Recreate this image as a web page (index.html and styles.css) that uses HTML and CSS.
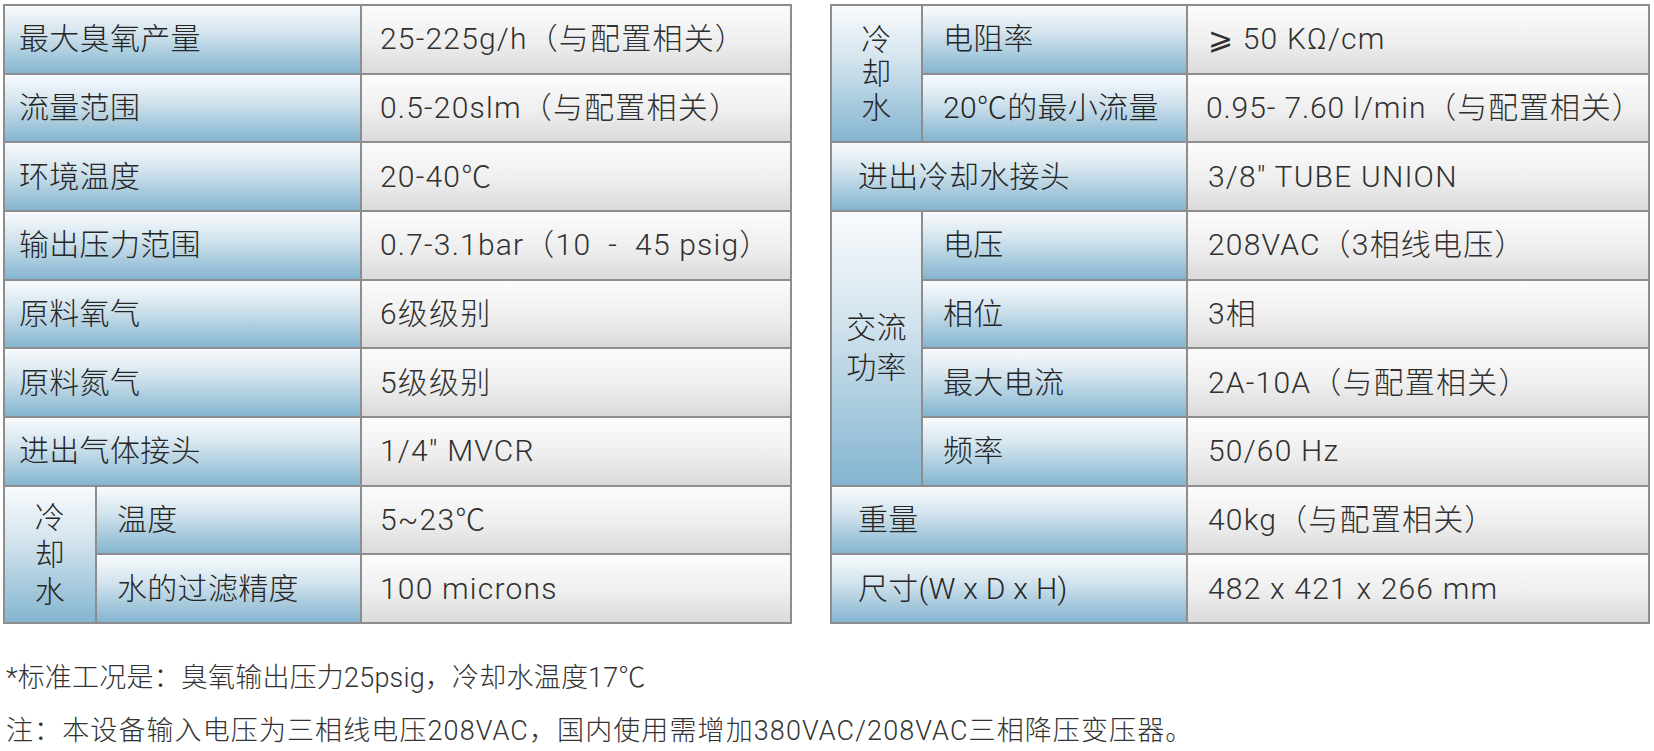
FILE: index.html
```html
<!DOCTYPE html>
<html lang="zh-CN">
<head>
<meta charset="utf-8">
<title>臭氧发生器参数</title>
<link rel="stylesheet" href="styles.css">
</head>
<body>
<div class="page">
  <div class="tables">
    <div class="spec spec-left">
      <div class="cell label span2">最大臭氧产量</div>
      <div class="cell value">25-225g/h（与配置相关）</div>
      <div class="cell label span2">流量范围</div>
      <div class="cell value">0.5-20slm（与配置相关）</div>
      <div class="cell label span2">环境温度</div>
      <div class="cell value">20-40℃</div>
      <div class="cell label span2">输出压力范围</div>
      <div class="cell value">0.7-3.1bar（10 &nbsp;- &nbsp;45 psig）</div>
      <div class="cell label span2">原料氧气</div>
      <div class="cell value">6级级别</div>
      <div class="cell label span2">原料氮气</div>
      <div class="cell value">5级级别</div>
      <div class="cell label span2">进出气体接头</div>
      <div class="cell value">1/4" MVCR</div>
      <div class="cell label group rows2 tall"><span>冷<br>却<br>水</span></div>
      <div class="cell label sub">温度</div>
      <div class="cell value">5~23℃</div>
      <div class="cell label sub">水的过滤精度</div>
      <div class="cell value">100 microns</div>
    </div>
    <div class="spec spec-right">
      <div class="cell label group rows2"><span>冷<br>却<br>水</span></div>
      <div class="cell label sub">电阻率</div>
      <div class="cell value">⩾ 50 KΩ/cm</div>
      <div class="cell label sub">20℃的最小流量</div>
      <div class="cell value long">0.95- 7.60 l/min（与配置相关）</div>
      <div class="cell label span2 wide">进出冷却水接头</div>
      <div class="cell value">3/8" TUBE UNION</div>
      <div class="cell label group rows4"><span>交流<br>功率</span></div>
      <div class="cell label sub">电压</div>
      <div class="cell value">208VAC（3相线电压）</div>
      <div class="cell label sub">相位</div>
      <div class="cell value">3相</div>
      <div class="cell label sub">最大电流</div>
      <div class="cell value">2A-10A（与配置相关）</div>
      <div class="cell label sub">频率</div>
      <div class="cell value">50/60 Hz</div>
      <div class="cell label span2 wide">重量</div>
      <div class="cell value">40kg（与配置相关）</div>
      <div class="cell label span2 wide">尺寸(W x D x H)</div>
      <div class="cell value">482 x 421 x 266 mm</div>
    </div>
  </div>
  <div class="notes">
    <p class="note-1">*标准工况是：臭氧输出压力25psig，冷却水温度17℃</p>
    <p class="note-2">注：本设备输入电压为三相线电压208VAC，国内使用需增加380VAC/208VAC三相降压变压器。</p>
  </div>
</div>
</body>
</html>
```
FILE: styles.css
```css
html, body {
  margin: 0;
  padding: 0;
  background: #ffffff;
}

.page {
  padding: 4px 0 0 3px;
  font-family: "Roboto", "Noto Sans CJK SC", sans-serif;
  font-weight: 300;
  color: #262626;
}

.tables {
  display: flex;
  gap: 38px;
  align-items: flex-start;
}

.spec {
  display: grid;
  grid-template-rows: repeat(9, 1fr);
  gap: 2px;
  padding: 2px;
  height: 620px;
  box-sizing: border-box;
  background: #8d8d8d;
}

.spec-left {
  width: 789px;
  grid-template-columns: 90px 263px 428px;
}

.spec-right {
  width: 820px;
  grid-template-columns: 89px 263px 460px;
}

.cell {
  display: flex;
  align-items: center;
  font-size: 30px;
  line-height: 1;
  white-space: nowrap;
  letter-spacing: 0.3px;
  min-width: 0;
}

.label {
  background: linear-gradient(to bottom, #f9fbfd 0%, #d3e4ee 40%, #84b5d0 100%);
  padding-left: 14px;
}

.value {
  background: linear-gradient(to bottom, #fcfcfc 0%, #eeeeee 55%, #dadada 100%);
  padding-left: 18px;
  color: #303030;
  letter-spacing: 1.2px;
}

.spec-right .value.long {
  letter-spacing: 0.9px;
  padding-left: 18px;
}

.span2 {
  grid-column: span 2;
}

.spec-right .wide {
  padding-left: 26px;
}

.sub {
  padding-left: 20px;
}

.spec-right .value {
  padding-left: 20px;
}

.group {
  justify-content: center;
  padding-left: 0;
  text-align: center;
}

.rows2 {
  grid-row: span 2;
  line-height: 34px;
}

.rows2.tall {
  line-height: 37px;
}

.rows4 {
  grid-row: span 4;
  line-height: 40px;
}

.notes {
  margin-top: 28px;
  padding-left: 3px;
}

.notes p {
  margin: 0;
  font-size: 27px;
  line-height: 53px;
  color: #333333;
  white-space: nowrap;
}

.note-1 {
  letter-spacing: 0.2px;
}

.note-2 {
  letter-spacing: 1.1px;
}
```
